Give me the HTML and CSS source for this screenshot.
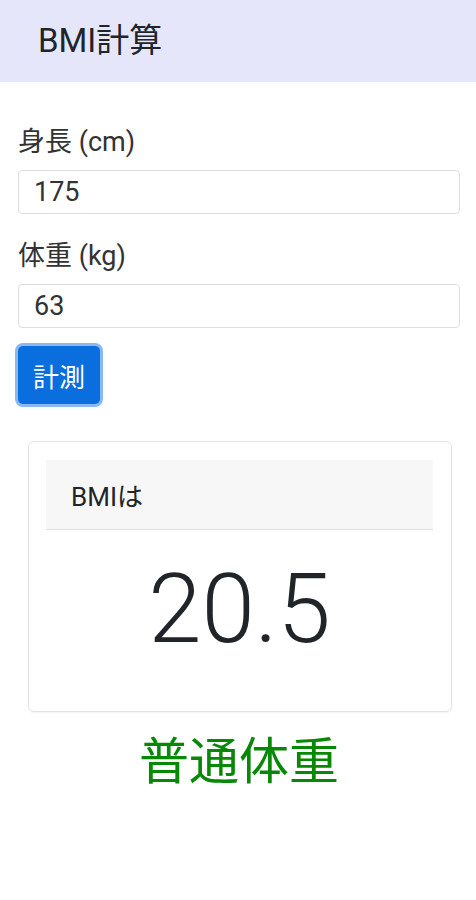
FILE: index.html
```html
<!DOCTYPE html>
<html lang="ja">
<head>
    <meta charset="UTF-8">
    <meta name="viewport" content="width=device-width, initial-scale=1.0">
    <title>BMI計算</title>
    <link rel="stylesheet" href="styles.css">
</head>
<body>

    <header class="app-bar">
        <h1 class="app-title">BMI計算</h1>
    </header>

    <main class="content">
        <!-- 入力フォーム -->
        <div class="field">
            <label class="field-label" for="heightInput">身長 (cm)</label>
            <input class="field-input" type="number" id="heightInput" value="175">
        </div>
        <div class="field">
            <label class="field-label" for="weightInput">体重 (kg)</label>
            <input class="field-input" type="number" id="weightInput" value="63">
        </div>
        <button class="measure-btn" type="button">計測</button>

        <!-- 結果 -->
        <div class="result-card">
            <div class="result-header">BMIは</div>
            <div class="result-body">
                <div class="result-value">20.5</div>
            </div>
        </div>
        <p class="result-label">普通体重</p>
    </main>

</body>
</html>
```

FILE: styles.css
```css
body {
    margin: 0;
    font-family: Roboto, "Noto Sans CJK JP", sans-serif;
    color: #212529;
    background-color: #fff;
}

/* Top bar */
.app-bar {
    height: 82px;
    background-color: #e6e6fa;
    display: flex;
    align-items: center;
    padding-left: 38px;
}

.app-title {
    margin: 0;
    font-size: 33px;
    font-weight: normal;
    line-height: 1.2;
}

.content {
    padding: 45px 16px 0 18px;
}

.field {
    display: flex;
    flex-direction: column;
    margin-bottom: 27px;
}

.field + .field {
    margin-bottom: 18px;
}

.field-label {
    font-size: 27px;
    line-height: 30px;
    margin-bottom: 13px;
    color: #333;
}

.field-input {
    box-sizing: border-box;
    height: 44px;
    padding: 0 15px;
    border: 1px solid #dedede;
    border-radius: 4px;
    font-family: Roboto, "Noto Sans CJK JP", sans-serif;
    font-size: 27px;
    color: #333;
    -moz-appearance: textfield;
}

.field-input::-webkit-inner-spin-button,
.field-input::-webkit-outer-spin-button {
    -webkit-appearance: none;
    margin: 0;
}

.measure-btn {
    display: block;
    height: 58px;
    padding: 0 15px;
    border: none;
    border-radius: 5px;
    background-color: #0b6edf;
    color: #fff;
    font-family: Roboto, "Noto Sans CJK JP", sans-serif;
    font-size: 26px;
    box-shadow: 0 0 0 3px #8ab8f4;
    cursor: pointer;
}

/* Result card */
.result-card {
    margin: 37px 8px 0 10px;
    padding: 18px 18px 0 17px;
    border: 1px solid #e4e4e4;
    border-radius: 6px;
    box-shadow: 0 1px 2px rgba(0, 0, 0, 0.05);
}

.result-header {
    height: 70px;
    box-sizing: border-box;
    display: flex;
    align-items: center;
    padding-left: 25px;
    background-color: #f7f7f7;
    border-bottom: 1px solid #e2e2e2;
    font-size: 26px;
}

.result-body {
    padding: 22px 0 44px;
    text-align: center;
}

.result-value {
    font-size: 96px;
    font-weight: 300;
    line-height: 1.2;
}

.result-label {
    margin: 20px 0 0;
    text-align: center;
    font-size: 50px;
    line-height: 1.2;
    color: #078807;
}
```
